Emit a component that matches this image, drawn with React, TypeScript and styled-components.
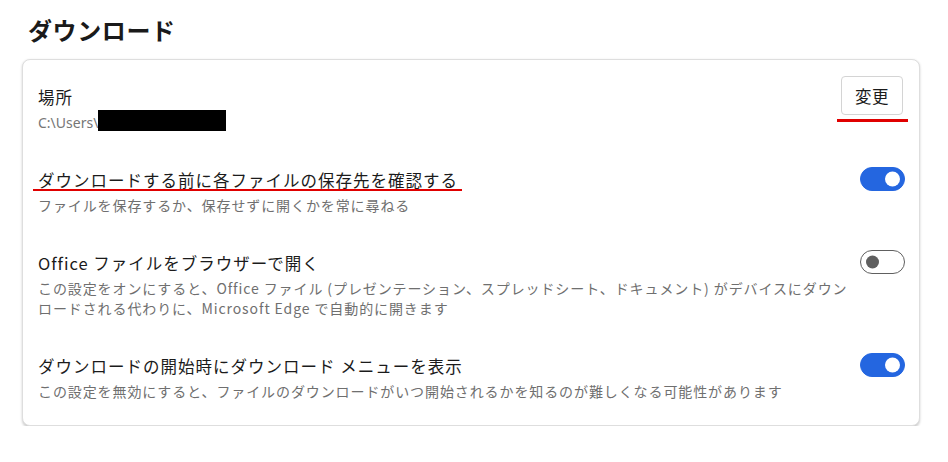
import React, { useState } from "react";
import styled, { createGlobalStyle } from "styled-components";

const GlobalStyle = createGlobalStyle`
  body {
    margin: 0;
    background: #ffffff;
    font-family: "Noto Sans CJK JP", "Noto Sans", sans-serif;
    color: #1b1b1b;
  }
`;

const Page = styled.div`
  padding: 0 28px 0 22px;
`;

const Heading = styled.h1`
  margin: 0;
  padding: 14px 0 13px 6px;
  font-size: 24px;
  line-height: 32px;
  font-weight: 700;
  letter-spacing: 0.6px;
  color: #1a1a1a;
`;

const Card = styled.section`
  border: 1px solid #dedede;
  border-radius: 8px;
  background: #fff;
  box-shadow: 0 1.5px 2.5px rgba(0, 0, 0, 0.2);
  padding-bottom: 6px;
`;

const Row = styled.div<{ $first?: boolean }>`
  display: flex;
  align-items: flex-start;
  justify-content: space-between;
  gap: 8px;
  padding: ${(p) => (p.$first ? "16px 15px 17px 15px" : "17px 14px 18px 15px")};
`;

const TextBlock = styled.div<{ $first?: boolean }>`
  display: flex;
  flex-direction: column;
  flex: 1;
  min-width: 0;
  gap: ${(p) => (p.$first ? "0" : "2px")};
  padding-top: ${(p) => (p.$first ? "8px" : "0")};
`;

const Label = styled.div`
  font-size: 16.5px;
  line-height: 26px;
  letter-spacing: 1px;
  color: #1b1b1b;
`;

const Marked = styled.span`
  position: relative;
  &::after {
    content: "";
    position: absolute;
    left: -5px;
    right: -4px;
    bottom: 1px;
    height: 2.5px;
    background: #e00000;
  }
`;

const Desc = styled.div`
  font-size: 14px;
  line-height: 20px;
  letter-spacing: 0.9px;
  color: #6f6f6f;
`;

const Path = styled.div`
  font-family: "Noto Sans", sans-serif;
  font-size: 14px;
  line-height: 20px;
  color: #767676;
`;

const Redacted = styled.span`
  display: inline-block;
  width: 128px;
  height: 21px;
  background: #000;
  vertical-align: -3px;
`;

const ButtonMark = styled.span`
  position: relative;
  display: inline-flex;
  margin-right: 1px;
  &::after {
    content: "";
    position: absolute;
    left: -4px;
    right: -5px;
    bottom: -7px;
    height: 3px;
    background: #e00000;
  }
`;

const ChangeButton = styled.button`
  width: 62px;
  height: 39px;
  border: 1px solid #d4d4d4;
  border-radius: 4px;
  background: #fff;
  font-family: inherit;
  font-size: 16.5px;
  color: #1b1b1b;
  letter-spacing: 0.5px;
  padding: 0;
  cursor: pointer;
`;

const Toggle = styled.button<{ $on: boolean }>`
  position: relative;
  flex: none;
  width: 45px;
  height: 24px;
  padding: 0;
  border-radius: 12px;
  border: 1px solid ${(p) => (p.$on ? "#2466e0" : "#606060")};
  background: ${(p) => (p.$on ? "#2466e0" : "#fff")};
  cursor: pointer;
  &::after {
    content: "";
    position: absolute;
    top: 50%;
    transform: translateY(-50%);
    left: ${(p) => (p.$on ? "24px" : "5px")};
    width: ${(p) => (p.$on ? "15px" : "13px")};
    height: ${(p) => (p.$on ? "15px" : "13px")};
    border-radius: 50%;
    background: ${(p) => (p.$on ? "#fff" : "#5f5f5f")};
  }
`;

type Setting = {
  label: string;
  desc: string;
  on: boolean;
  marked?: boolean;
};

const settings: Setting[] = [
  {
    label: "ダウンロードする前に各ファイルの保存先を確認する",
    desc: "ファイルを保存するか、保存せずに開くかを常に尋ねる",
    on: true,
    marked: true,
  },
  {
    label: "Office ファイルをブラウザーで開く",
    desc: "この設定をオンにすると、Office ファイル (プレゼンテーション、スプレッドシート、ドキュメント) がデバイスにダウンロードされる代わりに、Microsoft Edge で自動的に開きます",
    on: false,
  },
  {
    label: "ダウンロードの開始時にダウンロード メニューを表示",
    desc: "この設定を無効にすると、ファイルのダウンロードがいつ開始されるかを知るのが難しくなる可能性があります",
    on: true,
  },
];

const SettingRow = ({ item }: { item: Setting }) => {
  const [on, setOn] = useState(item.on);
  return (
    <Row>
      <TextBlock>
        <Label>{item.marked ? <Marked>{item.label}</Marked> : item.label}</Label>
        <Desc>{item.desc}</Desc>
      </TextBlock>
      <Toggle $on={on} aria-pressed={on} onClick={() => setOn(!on)} />
    </Row>
  );
};

const App = () => {
  return (
    <Page>
      <GlobalStyle />
      <Heading>ダウンロード</Heading>
      <Card>
        <Row $first>
          <TextBlock $first>
            <Label>場所</Label>
            <Path>
              C:\Users\
              <Redacted />
            </Path>
          </TextBlock>
          <ButtonMark>
            <ChangeButton>変更</ChangeButton>
          </ButtonMark>
        </Row>
        {settings.map((s) => (
          <SettingRow key={s.label} item={s} />
        ))}
      </Card>
    </Page>
  );
};

export default App;
